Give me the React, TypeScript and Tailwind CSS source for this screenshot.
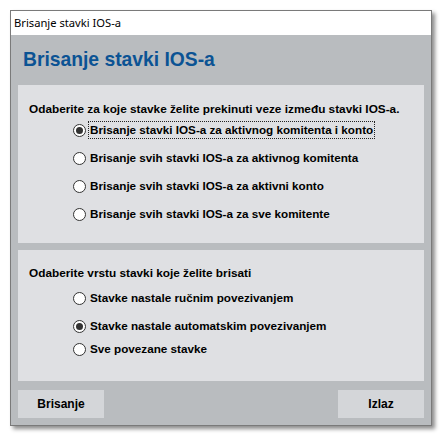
import React, { useState } from 'react';

const font = { fontFamily: '"Liberation Sans", Arial, sans-serif' };

function Radio({ label, checked, focused, onClick }: { label: string; checked: boolean; focused?: boolean; onClick: () => void }) {
  return (
    <button type="button" onClick={onClick} className="flex h-[18px] items-center text-left">
      <span className="flex h-[13px] w-[13px] shrink-0 items-center justify-center rounded-full border border-[#333] bg-white">
        {checked && <span className="h-[7px] w-[7px] rounded-full bg-[#333]" />}
      </span>
      <span
        className={
          'ml-[3px] px-[1px] text-[11.7px] font-bold leading-[16px] text-black ' +
          (focused ? 'outline outline-1 outline-dotted outline-[#222]' : '')
        }
      >
        {label}
      </span>
    </button>
  );
}

export default function App() {
  const [prvi, setPrvi] = useState(0);
  const [drugi, setDrugi] = useState(1);

  const opcije1 = [
    'Brisanje stavki IOS-a za aktivnog komitenta i konto',
    'Brisanje svih stavki IOS-a za aktivnog komitenta',
    'Brisanje svih stavki IOS-a za aktivni konto',
    'Brisanje svih stavki IOS-a za sve komitente',
  ];
  const opcije2 = ['Stavke nastale ručnim povezivanjem', 'Stavke nastale automatskim povezivanjem', 'Sve povezane stavke'];

  return (
    <div className="h-[438px] w-[443px] bg-white pl-[10px] pt-[10px]" style={font}>
      <div className="flex h-[416px] w-[422px] flex-col border border-[#7a7a7a] shadow-[3px_3px_4px_rgba(0,0,0,0.45)]">
        <div
          className="flex h-[24px] items-center bg-white pl-[3px] text-[11.2px] text-black"
          style={{ fontFamily: '"Noto Sans", "Open Sans", sans-serif' }}
        >
          Brisanje stavki IOS-a
        </div>
        <div className="flex flex-1 flex-col bg-[#b9bcbf] px-[7px] pb-[7px]">
          <h1 className="flex h-[50px] items-center pl-[5px] pt-[1px] text-[19.3px] font-bold text-[#0b5394]">
            Brisanje stavki IOS-a
          </h1>

          <section className="h-[158px] bg-[#dfe0e3] pl-[11px] pt-[16px]">
            <p className="text-[11.8px] font-bold leading-[16px] text-black">
              Odaberite za koje stavke želite prekinuti veze između stavki IOS-a.
            </p>
            <div className="ml-[44px] mt-[4px] flex flex-col gap-[10px]">
              {opcije1.map((o, i) => (
                <Radio key={o} label={o} checked={prvi === i} focused={i === 0} onClick={() => setPrvi(i)} />
              ))}
            </div>
          </section>

          <section className="mt-[7px] h-[131px] bg-[#dfe0e3] pl-[11px] pt-[15px]">
            <p className="text-[11.8px] font-bold leading-[16px] text-black">Odaberite vrstu stavki koje želite brisati</p>
            <div className="ml-[44px] mt-[8px] flex flex-col">
              <Radio label={opcije2[0]} checked={drugi === 0} onClick={() => setDrugi(0)} />
              <div className="mt-[10px]">
                <Radio label={opcije2[1]} checked={drugi === 1} onClick={() => setDrugi(1)} />
              </div>
              <div className="mt-[5px]">
                <Radio label={opcije2[2]} checked={drugi === 2} onClick={() => setDrugi(2)} />
              </div>
            </div>
          </section>

          <div className="mt-auto flex justify-between">
            <button type="button" className="h-[28px] w-[86px] bg-[#d4d6d9] text-[12px] font-bold text-black">
              Brisanje
            </button>
            <button type="button" className="h-[28px] w-[86px] bg-[#d4d6d9] text-[12px] font-bold text-black">
              Izlaz
            </button>
          </div>
        </div>
      </div>
    </div>
  );
}
